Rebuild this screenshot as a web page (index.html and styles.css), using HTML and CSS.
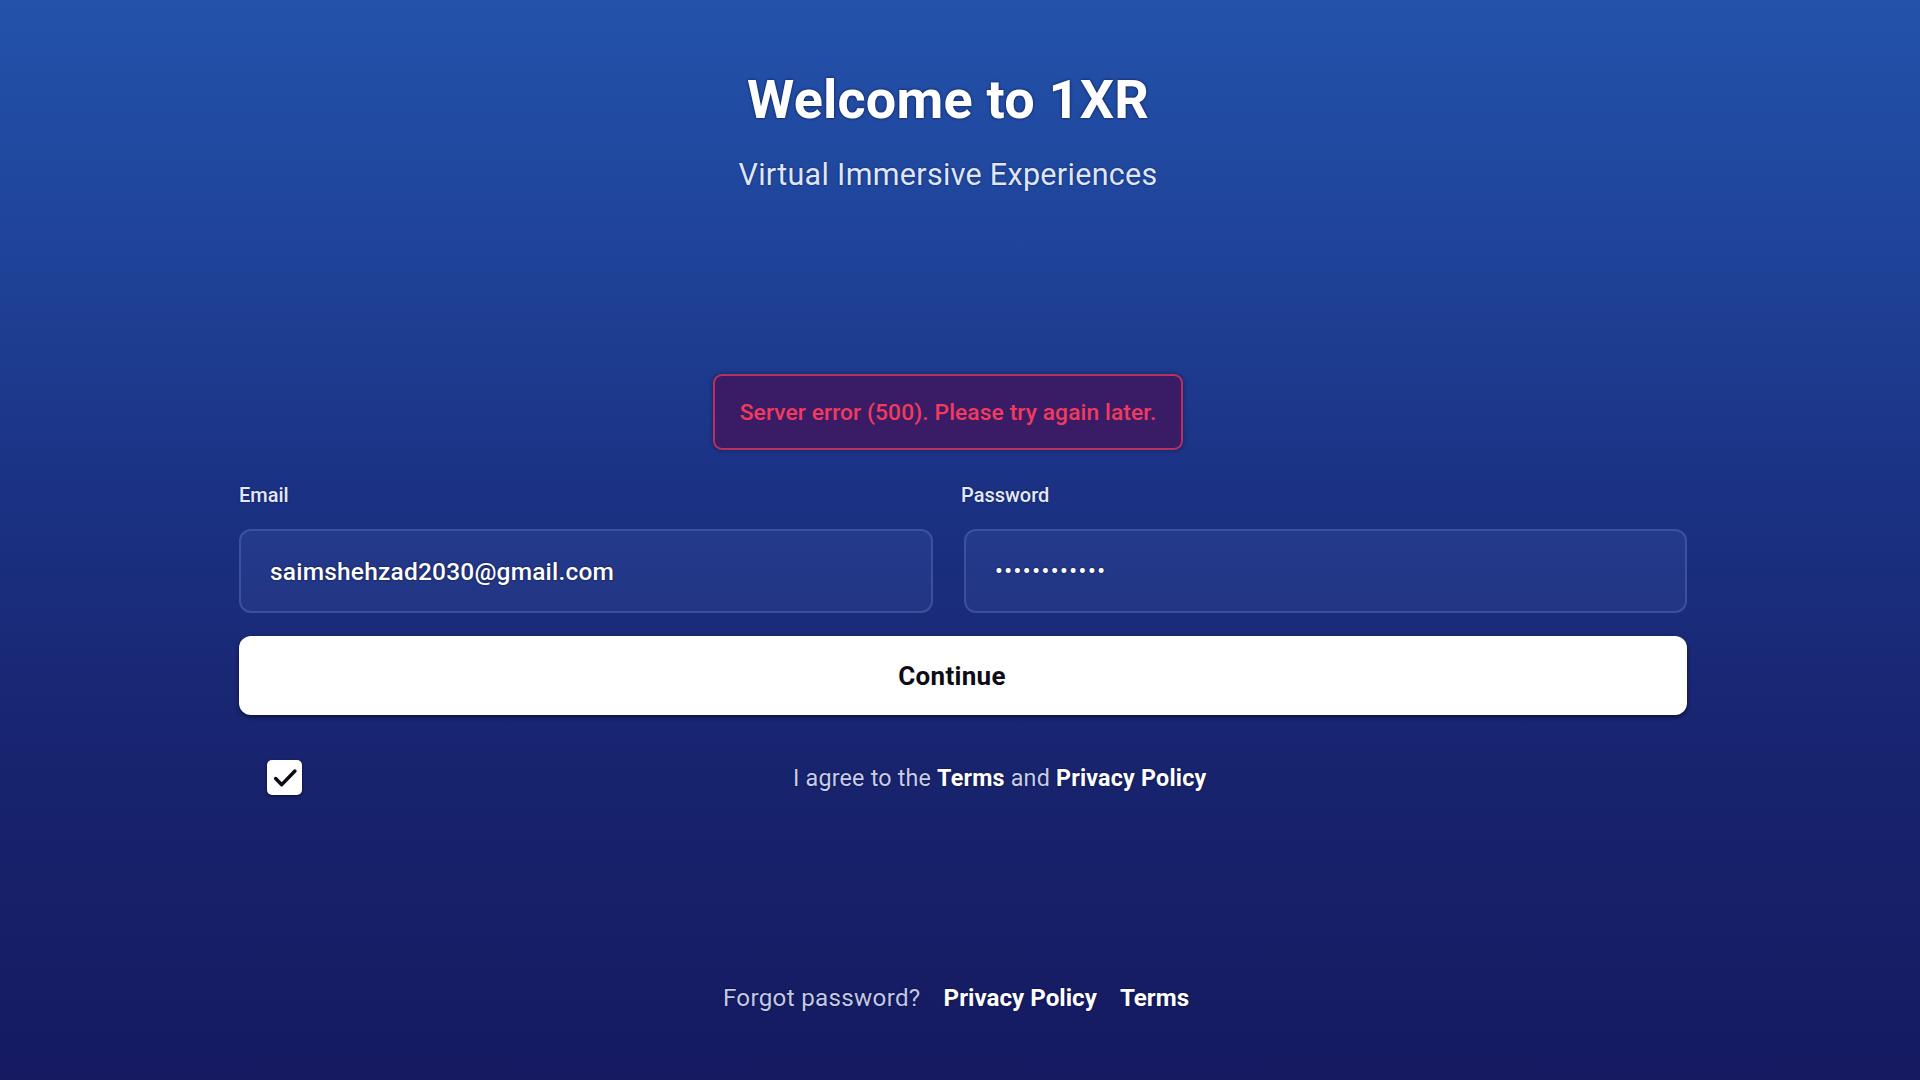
FILE: index.html
```html
<!DOCTYPE html>
<html lang="en">
<head>
<meta charset="utf-8">
<title>1XR – Sign in</title>
<link rel="stylesheet" href="styles.css">
</head>
<body>
<main class="page">
  <header class="hero">
    <h1 class="title">Welcome to 1XR</h1>
    <p class="subtitle">Virtual Immersive Experiences</p>
  </header>

  <section class="form">
    <div class="alert">Server error (500). Please try again later.</div>

    <div class="fields">
      <label class="field">
        <span class="label">Email</span>
        <span class="input">saimshehzad2030@gmail.com</span>
      </label>
      <label class="field">
        <span class="label">Password</span>
        <span class="input input-secret">••••••••••••</span>
      </label>
    </div>

    <button class="btn" type="button">Continue</button>

    <div class="agree">
      <span class="check">
        <svg viewBox="0 0 24 24" width="28" height="28" aria-hidden="true">
          <path d="M4 12.5l5.2 5.2L20.5 6" fill="none" stroke="#0b0b14" stroke-width="3" stroke-linecap="round" stroke-linejoin="round"/>
        </svg>
      </span>
      <p class="agree-text">I agree to the <b>Terms</b> and <b>Privacy Policy</b></p>
    </div>
  </section>

  <footer class="footer">
    <a class="link-muted">Forgot password?</a>
    <a class="link">Privacy Policy</a>
    <a class="link">Terms</a>
  </footer>
</main>
</body>
</html>
```

FILE: styles.css
```css
* { box-sizing: border-box; }

html, body {
  margin: 0;
  height: 100%;
}

body {
  font-family: Roboto, "Liberation Sans", Arial, sans-serif;
  color: #fff;
  background: linear-gradient(180deg, #2352ab 0%, #1f449a 22%, #1b3284 45%, #18246f 70%, #151a61 100%);
  overflow: hidden;
}

.page {
  height: 1080px;
  display: flex;
  flex-direction: column;
  align-items: center;
}

/* heading block sits slightly left of the form's centre line */
.hero {
  padding-top: 68px;
  padding-right: 24px;
  text-align: center;
}

.title {
  margin: 0;
  font-size: 54px;
  line-height: 64px;
  font-weight: 700;
  letter-spacing: 0.2px;
  text-shadow: 0 0 3px rgba(10, 16, 60, 0.9);
}

.subtitle {
  margin: 26px 0 0;
  font-size: 30.5px;
  line-height: 34px;
  color: #dfe6fb;
  letter-spacing: 0.3px;
  text-shadow: 0 0 2px rgba(10, 16, 60, 0.8);
}

.form {
  margin-top: 182px;
  width: 1448px;
  margin-left: 6px;
  display: flex;
  flex-direction: column;
  align-items: stretch;
}

.alert {
  align-self: center;
  width: 470px;
  height: 76px;
  margin-left: -30px;
  display: flex;
  align-items: center;
  justify-content: center;
  background: #3a1c66;
  border: 2px solid #b9315f;
  border-radius: 9px;
  color: #f03a5e;
  font-size: 22.8px;
  font-weight: 500;
  letter-spacing: 0.1px;
  box-shadow: 0 0 4px rgba(10, 10, 40, 0.5);
}

.fields {
  margin-top: 33px;
  display: grid;
  grid-template-columns: 694px 1fr;
  column-gap: 31px;
}

.field {
  display: flex;
  flex-direction: column;
}

.label {
  font-size: 20px;
  line-height: 24px;
  font-weight: 500;
  color: #e4e9fa;
  text-shadow: 0 0 2px rgba(10, 16, 60, 0.8);
}

.field + .field .label {
  margin-left: -3px;
}

.input {
  margin-top: 22px;
  height: 84px;
  display: flex;
  align-items: center;
  padding-left: 29px;
  background: rgba(120, 150, 230, 0.1);
  border: 2px solid rgba(150, 175, 240, 0.22);
  border-radius: 12px;
  font-size: 24.5px;
  font-weight: 500;
  color: #fff;
  letter-spacing: 0.2px;
  text-shadow: 0 0 2px rgba(5, 10, 40, 0.9);
}

.input-secret {
  font-size: 22px;
  letter-spacing: 1.6px;
}

.btn {
  margin-top: 23px;
  height: 79px;
  width: 100%;
  padding: 0 22px 0 0;
  border: 0;
  border-radius: 12px;
  background: #fff;
  color: #0c0c16;
  font-family: inherit;
  font-size: 26px;
  font-weight: 700;
  letter-spacing: 0.3px;
  box-shadow: 0 2px 4px rgba(0, 0, 20, 0.6);
  cursor: pointer;
}

.agree {
  margin-top: 45px;
  display: flex;
  align-items: center;
}

.check {
  margin-left: 28px;
  width: 35px;
  height: 35px;
  border-radius: 5px;
  background: #fff;
  display: flex;
  align-items: center;
  justify-content: center;
  box-shadow: 0 1px 3px rgba(0, 0, 20, 0.7);
}

.agree-text {
  margin: 0 0 0 491px;
  font-size: 23.3px;
  color: #c7cde8;
  letter-spacing: 0.2px;
  text-shadow: 0 0 2px rgba(5, 10, 40, 0.8);
}

.agree-text b {
  color: #fff;
  font-weight: 700;
}

.footer {
  margin-top: auto;
  margin-bottom: 68px;
  display: flex;
  align-items: center;
  gap: 23px;
  font-size: 24.2px;
  margin-left: -8px;
  text-shadow: 0 0 2px rgba(5, 10, 40, 0.9);
}

.link-muted {
  color: #c3c8e6;
  letter-spacing: 0.3px;
}

.link {
  color: #fff;
  font-weight: 700;
}
```
